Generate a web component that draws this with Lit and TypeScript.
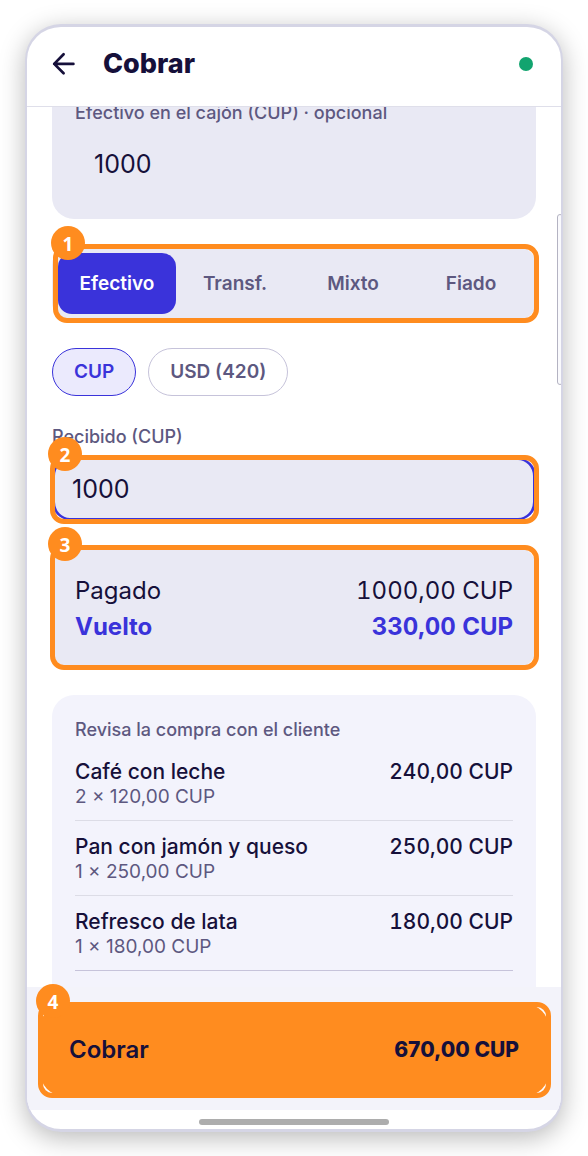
import { LitElement, html, css } from "lit";
import { customElement, property, state } from "lit/decorators.js";
import { classMap } from "lit/directives/class-map.js";

interface LineItem {
  name: string;
  detail: string;
  total: string;
}

/** Numbered frame that calls attention to whatever it wraps. */
@customElement("step-mark")
class StepMark extends LitElement {
  @property({ type: Number }) step = 1;

  static styles = css`
    :host {
      display: block;
      position: relative;
    }
    .frame {
      position: absolute;
      inset: var(--mark-inset, -3px -3px -3px -2px);
      border: 5px solid #ff8c1f;
      border-radius: 14px;
      pointer-events: none;
    }
    .badge {
      position: absolute;
      left: -7px;
      top: -23px;
      width: 34px;
      height: 34px;
      border-radius: 50%;
      background: #ff8c1f;
      color: #fff;
      font: 700 19px/36px "Open Sans", sans-serif;
      text-align: center;
    }
  `;

  render() {
    return html`<slot></slot>
      <div class="frame"><span class="badge">${this.step}</span></div>`;
  }
}

@customElement("app-root")
class AppRoot extends LitElement {
  @state() private method = "Efectivo";
  @state() private currency = "CUP";

  private methods = ["Efectivo", "Transf.", "Mixto", "Fiado"];
  private currencies = [
    { id: "CUP", label: "CUP" },
    { id: "USD", label: "USD (420)" },
  ];
  private items: LineItem[] = [
    { name: "Café con leche", detail: "2 × 120,00 CUP", total: "240,00 CUP" },
    { name: "Pan con jamón y queso", detail: "1 × 250,00 CUP", total: "250,00 CUP" },
    { name: "Refresco de lata", detail: "1 × 180,00 CUP", total: "180,00 CUP" },
  ];

  static styles = css`
    :host {
      display: block;
      box-sizing: border-box;
      padding: 24px 25px;
      background: #fff;
      color: #16103a;
      font-family: Inter, "Liberation Sans", sans-serif;
      font-size: 19px;
      line-height: 24px;
    }
    * {
      box-sizing: border-box;
    }
    button,
    input {
      font: inherit;
      color: inherit;
      margin: 0;
      border: 0;
      background: none;
      outline: none;
    }
    button {
      cursor: pointer;
    }
    .phone {
      position: relative;
      border: solid #d5d5e5;
      border-width: 3px 2px;
      border-radius: 36px;
      background: #fff;
      box-shadow: 0 6px 26px rgba(0, 0, 0, 0.28);
      overflow: hidden;
    }
    .bar {
      display: flex;
      align-items: center;
      gap: 26px;
      height: 80px;
      padding: 0 28px 6px 24px;
      border-bottom: 1px solid #dfdfea;
    }
    .back {
      display: flex;
      padding: 0;
    }
    .title {
      flex: 1;
      margin: 0;
      font-size: 27px;
      line-height: 36px;
      font-weight: 800;
    }
    .online {
      width: 14px;
      height: 14px;
      border-radius: 50%;
      background: #12a46f;
    }
    .scroll {
      display: flex;
      flex-direction: column;
      gap: 28px;
      padding: 0 25px;
      overflow: hidden;
    }
    .drawer {
      display: flex;
      flex-direction: column;
      gap: 6px;
      margin-top: -30px;
      padding: 23px;
      border-radius: 22px;
      background: #e9e9f4;
    }
    .label {
      color: #5d5880;
      font-weight: 500;
      font-size: 18px;
      line-height: 26px;
    }
    .amount {
      width: 100%;
      height: 64px;
      padding: 0 19px;
      font-size: 25px;
    }
    .tabs {
      display: grid;
      grid-template-columns: repeat(4, 1fr);
      padding: 6px;
      border-radius: 18px;
      background: #e9e9f4;
    }
    .tab {
      height: 61px;
      padding: 0;
      border-radius: 14px;
      color: #5d5880;
      font-weight: 600;
    }
    .tab.on {
      background: #3a33da;
      color: #fff;
    }
    .tabs-mark {
      --mark-inset: -3px -3px -3px 1px;
    }
    .chips {
      display: flex;
      gap: 12px;
    }
    .chip {
      height: 48px;
      padding: 0 21px;
      border: 1px solid #c6c3da;
      border-radius: 24px;
      color: #5d5880;
      font-weight: 600;
    }
    .chip.on {
      border-color: #3a33da;
      background: #ebeafd;
      color: #3a33da;
    }
    .field {
      display: flex;
      flex-direction: column;
      gap: 8px;
    }
    .received {
      display: block;
      width: 100%;
      height: 62px;
      padding: 0 17px;
      border: solid #3a33da;
      border-width: 2px 3px;
      border-radius: 18px;
      background: #e9e9f4;
      font-size: 25px;
    }
    .field-mark {
      --mark-inset: -3px -3px -4px -2px;
    }
    .sums {
      margin: 0;
      padding: 25px 23px 22px;
      border-radius: 18px;
      background: #e9e9f4;
      font-size: 24px;
      line-height: 36px;
    }
    .sum {
      display: flex;
      justify-content: space-between;
    }
    .sum dd {
      margin: 0;
      font-variant-numeric: tabular-nums;
    }
    .change {
      color: #3a33da;
      font-weight: 700;
    }
    .review {
      padding: 22px 23px 16px;
      border-radius: 22px 22px 0 0;
      background: #f3f3fc;
    }
    .review-title {
      margin: 0 0 3px;
    }
    .items {
      margin: 0;
      padding: 0;
      list-style: none;
    }
    .item {
      display: flex;
      justify-content: space-between;
      padding: 13px 0 11px;
      border-bottom: 1px solid #dcdce6;
    }
    .item:last-child {
      border-color: #c6c3da;
    }
    .name {
      font-size: 21px;
      line-height: 26px;
      font-weight: 500;
    }
    .total {
      font-variant-numeric: tabular-nums;
    }
    .detail {
      color: #5d5880;
    }
    .footer {
      padding: 17px 12px 14px 13px;
      background: #f3f3fa;
    }
    .pay {
      display: flex;
      align-items: center;
      justify-content: space-between;
      width: 100%;
      height: 92px;
      padding: 0 30px 0 29px;
      border-radius: 24px;
      background: #ff8c1f;
      box-shadow: 0 0 0 1px #fff;
      font-size: 24px;
      font-weight: 600;
    }
    .pay-total {
      font-size: 21px;
      font-weight: 800;
    }
    .pay-mark {
      --mark-inset: -2px;
    }
    .home {
      display: flex;
      justify-content: center;
      padding: 9px 0 4px;
    }
    .home-bar {
      width: 190px;
      height: 6px;
      border-radius: 3px;
      background: #adadad;
    }
    .thumb {
      position: absolute;
      right: -2px;
      top: 187px;
      width: 6px;
      height: 171px;
      border: 1px solid #b4b3c2;
      border-radius: 5px;
      background: #fafafd;
    }
  `;

  render() {
    return html`
      <main class="phone">
        <header class="bar">
          <button class="back" aria-label="Atrás">
            <svg width="26" height="26" viewBox="0 0 26 26" fill="none" stroke="#16103a"
              stroke-width="2.7" stroke-linecap="round" stroke-linejoin="round">
              <path d="M22.4 12.9H3.2M12.6 3.3L3.2 12.9l9.4 9.4" />
            </svg>
          </button>
          <h1 class="title">Cobrar</h1>
          <span class="online"></span>
        </header>

        <div class="scroll">
          <section class="drawer">
            <label class="label" for="drawer">Efectivo en el cajón (CUP) · opcional</label>
            <input class="amount" id="drawer" inputmode="decimal" value="1000" />
          </section>

          <step-mark class="tabs-mark" step="1">
            <div class="tabs">
              ${this.methods.map(
                (m) => html`<button
                  class=${classMap({ tab: true, on: m === this.method })}
                  @click=${() => (this.method = m)}
                >${m}</button>`
              )}
            </div>
          </step-mark>

          <div class="chips">
            ${this.currencies.map(
              (c) => html`<button
                class=${classMap({ chip: true, on: c.id === this.currency })}
                @click=${() => (this.currency = c.id)}
              >${c.label}</button>`
            )}
          </div>

          <div class="field">
            <label class="label" for="received">Recibido (CUP)</label>
            <step-mark class="field-mark" step="2">
              <input class="received" id="received" inputmode="decimal" value="1000" />
            </step-mark>
          </div>

          <step-mark step="3">
            <dl class="sums">
              <div class="sum"><dt>Pagado</dt><dd>1000,00 CUP</dd></div>
              <div class="sum change"><dt>Vuelto</dt><dd>330,00 CUP</dd></div>
            </dl>
          </step-mark>

          <section class="review">
            <p class="label review-title">Revisa la compra con el cliente</p>
            <ul class="items">
              ${this.items.map(
                (i) => html`<li class="item">
                  <div>
                    <div class="name">${i.name}</div>
                    <div class="detail">${i.detail}</div>
                  </div>
                  <div class="name total">${i.total}</div>
                </li>`
              )}
            </ul>
          </section>
        </div>

        <footer class="footer">
          <step-mark class="pay-mark" step="4">
            <button class="pay">
              <span>Cobrar</span>
              <span class="pay-total">670,00 CUP</span>
            </button>
          </step-mark>
        </footer>
        <div class="home"><span class="home-bar"></span></div>
        <div class="thumb"></div>
      </main>
    `;
  }
}
